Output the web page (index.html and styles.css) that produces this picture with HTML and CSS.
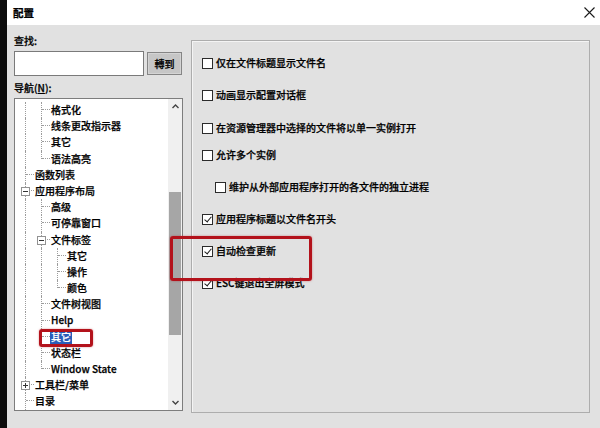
FILE: index.html
```html
<!doctype html>
<html>

<head lang="zh">
  <meta charset="utf-8">
  <title>配置</title>
  <link rel="stylesheet" href="styles.css">
</head>

<body>
  <div class="screen">
    <div class="edge"></div>

    <div class="window">
      <div class="titlebar">
        <span class="title">配置</span>
        <svg class="close" width="11" height="11" viewBox="0 0 11 11">
          <path d="M0.5 0.5 L10.5 10.5 M10.5 0.5 L0.5 10.5" stroke="#1a1a1a" stroke-width="1.1" fill="none" />
        </svg>
      </div>

      <div class="content">
        <div class="sidebar">
          <div class="caption">查找:</div>
          <div class="search">
            <input class="find" type="text">
            <button class="go">轉到</button>
          </div>
          <div class="caption nav">导航(<u>N</u>):</div>

          <div class="tree">
            <div class="items">
              <div class="row"><span class="g line"></span><span class="g tee"></span><span class="label">格式化</span></div>
              <div class="row"><span class="g line"></span><span class="g tee"></span><span class="label">线条更改指示器</span></div>
              <div class="row"><span class="g line"></span><span class="g tee"></span><span class="label">其它</span></div>
              <div class="row"><span class="g line"></span><span class="g elbow"></span><span class="label">语法高亮</span></div>
              <div class="row"><span class="g tee"></span><span class="label">函数列表</span></div>
              <div class="row"><span class="g tee"><i class="box"></i></span><span class="label">应用程序布局</span></div>
              <div class="row"><span class="g line"></span><span class="g tee"></span><span class="label">高级</span></div>
              <div class="row"><span class="g line"></span><span class="g tee"></span><span class="label">可停靠窗口</span></div>
              <div class="row"><span class="g line"></span><span class="g tee"><i class="box"></i></span><span class="label">文件标签</span></div>
              <div class="row"><span class="g line"></span><span class="g line"></span><span class="g tee"></span><span class="label">其它</span></div>
              <div class="row"><span class="g line"></span><span class="g line"></span><span class="g tee"></span><span class="label">操作</span></div>
              <div class="row"><span class="g line"></span><span class="g line"></span><span class="g elbow"></span><span class="label">颜色</span></div>
              <div class="row"><span class="g line"></span><span class="g tee"></span><span class="label">文件树视图</span></div>
              <div class="row"><span class="g line"></span><span class="g tee"></span><span class="label">Help</span></div>
              <div class="row"><span class="g line"></span><span class="g tee"></span><span class="label selected">其它</span></div>
              <div class="row"><span class="g line"></span><span class="g tee"></span><span class="label">状态栏</span></div>
              <div class="row"><span class="g line"></span><span class="g elbow"></span><span class="label">Window State</span></div>
              <div class="row"><span class="g tee"><i class="box plus"></i></span><span class="label">工具栏/菜单</span></div>
              <div class="row"><span class="g tee"></span><span class="label">目录</span></div>
            </div>

            <div class="scrollbar">
              <div class="arrow">
                <svg width="7" height="5" viewBox="0 0 7 5"><path d="M0.5 4 L3.5 1 L6.5 4" stroke="#444" stroke-width="1.4" fill="none" /></svg>
              </div>
              <div class="track"><div class="thumb"></div></div>
              <div class="arrow">
                <svg width="7" height="5" viewBox="0 0 7 5"><path d="M0.5 1 L3.5 4 L6.5 1" stroke="#444" stroke-width="1.4" fill="none" /></svg>
              </div>
            </div>
          </div>
        </div>

        <div class="panel">
          <div class="opt first"><span class="cb"></span>仅在文件标题显示文件名</div>
          <div class="opt"><span class="cb"></span>动画显示配置对话框</div>
          <div class="opt third"><span class="cb"></span>在资源管理器中选择的文件将以单一实例打开</div>
          <div class="opt fourth"><span class="cb"></span>允许多个实例</div>
          <div class="opt sub"><span class="cb"></span>维护从外部应用程序打开的各文件的独立进程</div>
          <div class="opt"><span class="cb on"></span>应用程序标题以文件名开头</div>
          <div class="opt"><span class="cb on"></span>自动检查更新</div>
          <div class="opt"><span class="cb on"></span>ESC键退出全屏模式</div>
        </div>
      </div>
    </div>

    <!-- red marks drawn over the dialog -->
    <div class="mark mark-update"></div>
    <div class="mark mark-other"></div>
  </div>
</body>

</html>
```

FILE: styles.css
```css
body {
  margin: 0;
  background: #e1e1e1;
  font-family: "Noto Sans CJK SC", "Noto Sans", sans-serif;
  font-size: 10px;
  color: #000;
  -webkit-text-stroke: 0.25px #000;
}

.screen {
  position: relative;
  display: flex;
  width: 600px;
  height: 428px;
  overflow: hidden;
}

.edge {
  width: 7px;
  flex: none;
  background: #0c0c0c;
}

.window {
  flex: 1;
  display: flex;
  flex-direction: column;
  background: #e1e1e1;
}

.titlebar {
  height: 25px;
  flex: none;
  display: flex;
  align-items: center;
  justify-content: space-between;
  background: #fff;
  padding: 0 6px 0 6px;
}

.title {
  font-size: 10.5px;
  font-weight: 700;
}

.close {
  margin-right: -1px;
}

.content {
  display: flex;
  padding-left: 7px;
}

.sidebar {
  width: 169px;
  flex: none;
  padding-top: 10px;
}

.caption {
  line-height: 12px;
  height: 12px;
  font-weight: 500;
}

.nav {
  margin-top: 6px;
}

.search {
  display: flex;
  align-items: center;
  margin-top: 4px;
  height: 25px;
}

.find {
  width: 130px;
  height: 25px;
  box-sizing: border-box;
  border: 1px solid #7a7a7a;
  background: #fff;
  margin: 0;
  padding: 0;
}

.go {
  width: 35px;
  height: 23px;
  margin-left: 3px;
  box-sizing: border-box;
  border: 1px solid #858585;
  box-shadow: inset 0 0 0 1px #d4d4d4;
  background: #c6c6c6;
  font-family: inherit;
  font-size: 10px;
  font-weight: 500;
  -webkit-text-stroke: 0.25px #000;
  color: #000;
  padding: 0;
}

.tree {
  margin-top: 4px;
  height: 313px;
  box-sizing: border-box;
  border: 1px solid #7d7d7d;
  background: #fff;
  display: flex;
}

.items {
  flex: 1;
  overflow: hidden;
  padding: 3px 0 0 3px;
}

.row {
  display: flex;
  height: 16.2px;
  line-height: 16px;
  white-space: nowrap;
}

/* tree guide cells: left half carries the vertical line, right half the connector */
.g {
  position: relative;
  width: 16px;
  height: 100%;
  flex: none;
  display: flex;
  align-items: flex-start;
}

.g::before {
  content: "";
  width: 8px;
  height: 100%;
  box-sizing: border-box;
  border-right: 1px dotted #9c9c9c;
}

.g.elbow::before {
  height: 50%;
}

.g.tee::after,
.g.elbow::after {
  content: "";
  width: 8px;
  height: 50%;
  box-sizing: border-box;
  border-bottom: 1px dotted #9c9c9c;
}

.box {
  position: absolute;
  left: 3px;
  top: 4px;
  width: 9px;
  height: 9px;
  box-sizing: border-box;
  border: 1px solid #929292;
  background: #fff;
}

.box::before {
  content: "";
  position: absolute;
  left: 1px;
  top: 3px;
  width: 5px;
  height: 1px;
  background: #333;
}

.box.plus::after {
  content: "";
  position: absolute;
  left: 3px;
  top: 1px;
  width: 1px;
  height: 5px;
  background: #333;
}

.label {
  margin-left: 1px;
  font-weight: 500;
}

.selected {
  margin-left: 0;
  padding: 0 1px;
  height: 14px;
  line-height: 14px;
  margin-top: 1px;
  background: #2a5cb8;
  color: #fff;
  -webkit-text-stroke: 0.2px #fff;
}

.scrollbar {
  width: 14px;
  flex: none;
  display: flex;
  flex-direction: column;
  background: #f0f0f0;
}

.arrow {
  height: 15px;
  flex: none;
  display: flex;
  align-items: center;
  justify-content: center;
}

.track {
  flex: 1;
}

.thumb {
  margin: 78px 1px 0 1px;
  height: 143px;
  background: #a6a6a6;
}

.panel {
  margin-left: 8px;
  margin-top: 15px;
  width: 399px;
  height: 373px;
  box-sizing: border-box;
  border: 1px solid #adadad;
  box-shadow: inset 1px 1px 0 #f4f4f4;
  padding: 16px 0 0 10px;
}

.opt {
  display: flex;
  align-items: center;
  height: 12px;
  line-height: 12px;
  margin-top: 20px;
  white-space: nowrap;
  font-weight: 500;
}

.opt.first {
  margin-top: 0;
}

.opt.third {
  margin-top: 21px;
}

.opt.fourth {
  margin-top: 15px;
}

.opt.sub {
  padding-left: 13px;
}

.cb {
  width: 11px;
  height: 11px;
  flex: none;
  box-sizing: border-box;
  border: 1px solid #2b2b2b;
  background: #fff;
  margin-right: 3px;
  position: relative;
}

.cb.on::after {
  content: "";
  position: absolute;
  left: 3px;
  top: 0px;
  width: 3px;
  height: 6px;
  border-right: 1.6px solid #1c1c1c;
  border-bottom: 1.6px solid #1c1c1c;
  transform: rotate(40deg);
}

.mark {
  position: absolute;
  box-sizing: border-box;
  border: 3px solid #b3121b;
  border-radius: 3px;
  box-shadow: 0 0 2px rgba(180, 20, 30, .5);
}

.mark-update {
  left: 170px;
  top: 236px;
  width: 142px;
  height: 45px;
}

.mark-other {
  left: 39px;
  top: 329px;
  width: 54px;
  height: 18px;
}
```
